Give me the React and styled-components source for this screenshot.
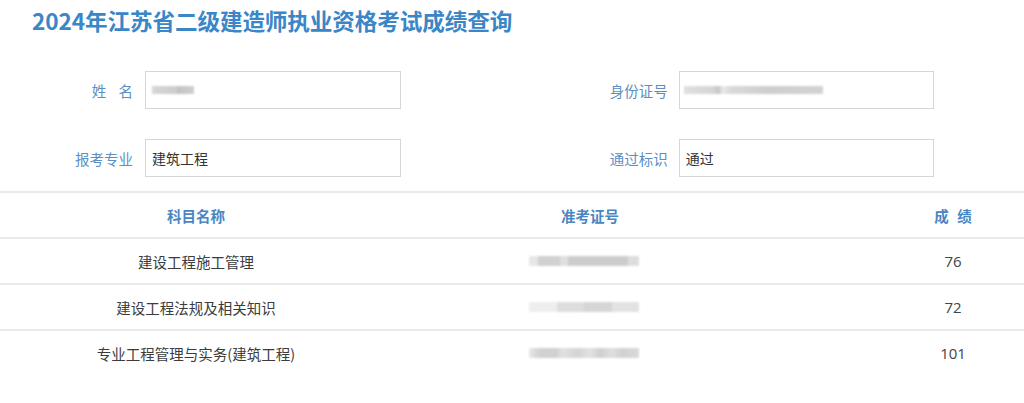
import React from "react";
import styled, { createGlobalStyle } from "styled-components";

const Global = createGlobalStyle`
  html, body { margin: 0; padding: 0; background: #fff; }
  body { font-family: "Noto Sans CJK SC", "Noto Sans", sans-serif; overflow: hidden; }
`;

const Page = styled.div`
  width: 1024px;
  height: 403px;
  overflow: hidden;
  background: #fff;
`;

const Title = styled.h1`
  margin: 0;
  padding: 6px 0 0 32px;
  height: 34px;
  font-size: 22.6px;
  line-height: 30px;
  font-weight: 700;
  color: #3a86c7;
  letter-spacing: -0.1px;
`;

const Form = styled.div`
  display: grid;
  grid-template-columns: 393px 391px;
  column-gap: 142px;
  row-gap: 30px;
  padding: 31px 0 0 8px;
  margin-bottom: 14px;
`;

const Field = styled.div`
  display: flex;
  align-items: center;
  gap: ${(p) => p.$gap || 12}px;
`;

const Label = styled.label`
  width: 125px;
  text-align: right;
  font-size: 14.5px;
  color: #5a8fc3;
  word-spacing: ${(p) => (p.$spaced ? "9px" : "0")};
`;

const Box = styled.div`
  box-sizing: border-box;
  width: 256px;
  height: 38px;
  border: 1px solid #d6d6d6;
  display: flex;
  align-items: center;
  padding-left: 6px;
  font-size: 14px;
  color: #333;
`;

const Blur = styled.span`
  display: inline-block;
  width: ${(p) => p.$w}px;
  height: ${(p) => p.$h || 8}px;
  margin-left: ${(p) => p.$ml || 0}px;
  background: ${(p) => p.$bg || "#c8c8c8"};
  filter: blur(1.2px);
  opacity: 0.85;
`;

const Table = styled.div`
  width: 1118px;
  border-top: 2px solid #e9e9e9;
`;

const Row = styled.div`
  display: grid;
  grid-template-columns: 392px 396px 330px;
  height: 44px;
  align-items: center;
  border-bottom: ${(p) => (p.$last ? "none" : "2px solid #e9e9e9")};
`;

const HeadCell = styled.div`
  text-align: center;
  font-size: 14.5px;
  font-weight: 700;
  color: #4a86c1;
  word-spacing: ${(p) => (p.$spaced ? "5px" : "0")};
`;

const Cell = styled.div`
  text-align: center;
  font-size: 14.5px;
  color: #3c3c3c;
  display: flex;
  justify-content: center;
  align-items: center;
`;

const Score = styled(Cell)`
  font-family: "Open Sans", "Liberation Sans", sans-serif;
  font-size: 15px;
  color: #444;
`;

const blurA =
  "linear-gradient(90deg,#e2e2e2 0,#e2e2e2 8%,#c9c9c9 8%,#c9c9c9 28%,#dadada 28%,#dadada 35%,#c4c4c4 35%,#c4c4c4 90%,#d8d8d8 90%)";
const blurB =
  "linear-gradient(90deg,#ececec 0,#ececec 25%,#d8d8d8 25%,#d8d8d8 50%,#cfcfcf 50%,#cfcfcf 75%,#dedede 75%)";
const blurC =
  "linear-gradient(90deg,#e4e4e4 0,#c9c9c9 10%,#c9c9c9 25%,#dcdcdc 30%,#cdcdcd 45%,#dedede 55%,#c7c7c7 65%,#dadada 75%,#c9c9c9 85%,#d4d4d4 100%)";

const rows = [
  { name: "建设工程施工管理", score: "76", bg: blurA },
  { name: "建设工程法规及相关知识", score: "72", bg: blurB },
  { name: "专业工程管理与实务(建筑工程)", score: "101", bg: blurC },
];

export default function App() {
  return (
    <Page>
      <Global />
      <Title>2024年江苏省二级建造师执业资格考试成绩查询</Title>
      <Form>
        <Field>
          <Label $spaced>姓 名</Label>
          <Box>
            <Blur $w={42} $bg="linear-gradient(90deg,#cfcfcf 0,#c4c4c4 60%,#b8b8b8 60%,#c8c8c8 100%)" />
          </Box>
        </Field>
        <Field $gap={11}>
          <Label>身份证号</Label>
          <Box>
            <Blur
              $w={139}
              $ml={-2}
              $bg="linear-gradient(90deg,#dadada 0,#d0d0d0 20%,#bdbdbd 25%,#e8e8e8 28%,#d4d4d4 33%,#c6c6c6 60%,#cbcbcb 100%)"
            />
          </Box>
        </Field>
        <Field>
          <Label>报考专业</Label>
          <Box>建筑工程</Box>
        </Field>
        <Field $gap={11}>
          <Label>通过标识</Label>
          <Box>通过</Box>
        </Field>
      </Form>
      <Table>
        <Row>
          <HeadCell>科目名称</HeadCell>
          <HeadCell>准考证号</HeadCell>
          <HeadCell $spaced>成 绩</HeadCell>
        </Row>
        {rows.map((r, i) => (
          <Row key={r.name} $last={i === rows.length - 1}>
            <Cell>{r.name}</Cell>
            <Cell>
              <Blur $w={110} $h={10} $bg={r.bg} style={{ marginLeft: -12 }} />
            </Cell>
            <Score>{r.score}</Score>
          </Row>
        ))}
      </Table>
    </Page>
  );
}
